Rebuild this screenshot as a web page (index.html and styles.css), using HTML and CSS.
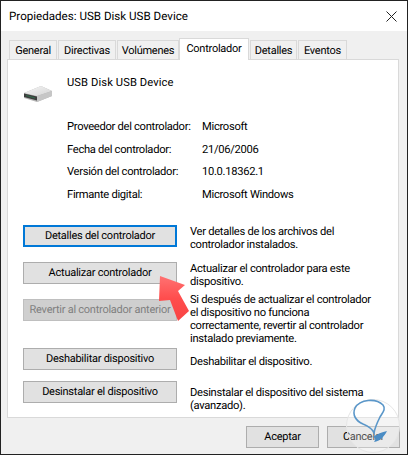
FILE: index.html
```html
<!DOCTYPE html>
<html lang="es">
<head>
  <meta charset="UTF-8">
  <title>Propiedades: USB Disk USB Device</title>
  <link rel="stylesheet" href="styles.css">
</head>
<body>
  <div class="window">
    <div class="titlebar">
      <span>Propiedades: USB Disk USB Device</span>
      <svg class="close" width="11" height="11" viewBox="0 0 11 11"><path d="M0.5 0.5L10.5 10.5M10.5 0.5L0.5 10.5" stroke="#222" fill="none"/></svg>
    </div>
    <div class="content">
      <div class="tabs">
        <div class="tab tab-general">General</div>
        <div class="tab tab-directivas">Directivas</div>
        <div class="tab tab-volumenes">Volúmenes</div>
        <div class="tab tab-active">Controlador</div>
        <div class="tab tab-detalles">Detalles</div>
        <div class="tab tab-eventos">Eventos</div>
      </div>
      <div class="panel">
        <div class="device">
          <svg class="device-icon" width="30" height="20" viewBox="0 0 30 20">
            <defs>
              <linearGradient id="driveTop" x1="0" y1="0" x2="1" y2="1">
                <stop offset="0" stop-color="#f6f6f6"/>
                <stop offset="1" stop-color="#d4d4d4"/>
              </linearGradient>
            </defs>
            <path d="M1 10L18 3L29 8L29 13L14 19L1 15Z" fill="#b5b5b5"/>
            <path d="M1 10L18 3L29 8L14 13Z" fill="url(#driveTop)"/>
            <path d="M14 13L29 8L29 13L14 19Z" fill="#c6c6c6"/>
            <path d="M1 10.5L14 13.5L14 17.5L1 14Z" fill="#3d3d3d"/>
            <path d="M3 12L12 14.5L12 15.5L3 13Z" fill="#2f6b4a"/>
          </svg>
          <span>USB Disk USB Device</span>
        </div>
        <div class="info">
          <span>Proveedor del controlador:</span><span>Microsoft</span>
          <span>Fecha del controlador:</span><span>21/06/2006</span>
          <span>Versión del controlador:</span><span>10.0.18362.1</span>
          <span>Firmante digital:</span><span>Microsoft Windows</span>
        </div>
        <div class="actions">
          <div class="action action-details">
            <button class="btn btn-focus">Detalles del controlador</button>
            <p>Ver detalles de los archivos del controlador instalados.</p>
          </div>
          <div class="action action-update">
            <button class="btn">Actualizar controlador</button>
            <p>Actualizar el controlador para este dispositivo.</p>
          </div>
          <div class="action action-revert">
            <button class="btn btn-disabled">Revertir al controlador anterior</button>
            <p>Si después de actualizar el controlador el dispositivo no funciona correctamente, revertir al controlador instalado previamente.</p>
          </div>
          <div class="action action-disable">
            <button class="btn">Deshabilitar dispositivo</button>
            <p>Deshabilitar el dispositivo.</p>
          </div>
          <div class="action action-remove">
            <button class="btn">Desinstalar el dispositivo</button>
            <p>Desinstalar el dispositivo del sistema (avanzado).</p>
          </div>
        </div>
      </div>
      <div class="footer">
        <button class="btn btn-footer">Aceptar</button>
        <button class="btn btn-footer">Cancelar</button>
      </div>
    </div>

    <svg class="arrow" width="34" height="48" viewBox="0 0 34 48">
      <defs>
        <linearGradient id="arrowFill" x1="0" y1="0" x2="0" y2="1">
          <stop offset="0" stop-color="#ff7272"/>
          <stop offset="0.5" stop-color="#ff4d4d"/>
          <stop offset="1" stop-color="#f84444"/>
        </linearGradient>
      </defs>
      <path d="M3 1L28 10L21 16L32 36L21 46L13 25L2 26Z" fill="url(#arrowFill)"/>
    </svg>

    <svg class="watermark" width="54" height="58" viewBox="0 0 54 58">
      <circle cx="27" cy="29" r="26.5" fill="#fff" fill-opacity="0.3" stroke="#e6e6e6"/>
      <path d="M37 8C30 1 14 2 9 11C6 18 10 24 17 27C22 29 26 31 28 36C29 30 32 24 34 20C37 15 40 12 37 8Z" fill="none" stroke="#5b97c9" stroke-width="1.6"/>
      <path d="M27 40C31 37 36 35 41 34C38 40 34 44 28 45C30 42 30 41 27 40Z" fill="#4a8cc4"/>
    </svg>
  </div>
</body>
</html>
```

FILE: styles.css
```css
* {
  box-sizing: border-box;
}

html,
body {
  margin: 0;
  height: 455px;
  overflow: hidden;
}

body {
  font-family: Roboto, Lato, sans-serif;
  font-size: 11.2px;
  letter-spacing: -0.3px;
  text-rendering: geometricPrecision;
  color: #000;
}

.window {
  position: relative;
  width: 408px;
  height: 455px;
  border: 1px solid #222;
  display: flex;
  flex-direction: column;
  background-color: #f0f0f0;
}

.titlebar {
  height: 30px;
  flex-shrink: 0;
  background-color: white;
  display: flex;
  align-items: center;
  justify-content: space-between;
  padding: 0 10px 0 8px;
  font-size: 11.6px;
  letter-spacing: 0;
}

.content {
  flex: 1;
  display: flex;
  flex-direction: column;
  padding: 7px 8px 0 6px;
}

/* tabs */
.tabs {
  display: flex;
  height: 21px;
  padding-left: 2px;
  align-items: flex-end;
  position: relative;
  z-index: 1;
  font-size: 11px;
  letter-spacing: -0.25px;
}

.tab {
  height: 19px;
  margin-right: 1px;
  background-color: #f0f0f0;
  border: 1px solid #d9d9d9;
  border-bottom: none;
  text-align: center;
  line-height: 20px;
}

.tab-general { width: 48px; }
.tab-directivas { width: 58px; }
.tab-volumenes { width: 62px; margin-right: 0; }
.tab-detalles { width: 47px; }
.tab-eventos { width: 49px; }

.tab-active {
  width: 70px;
  height: 22px;
  margin-bottom: -1px;
  background-color: white;
  line-height: 19px;
}

/* main panel */
.panel {
  width: 392px;
  height: 359px;
  background-color: white;
  border: 1px solid #d9d9d9;
  padding: 0 0 0 15px;
}

.device {
  display: flex;
  align-items: center;
  height: 45px;
  gap: 14px;
  letter-spacing: 0.1px;
}

.device-icon {
  margin-top: 20px;
}

.info {
  display: grid;
  grid-template-columns: 135px 1fr;
  grid-auto-rows: 22.7px;
  align-items: center;
  margin: 10px 0 0 44px;
  white-space: nowrap;
}

.actions {
  margin-top: 19px;
}

.action {
  display: flex;
  align-items: flex-start;
  gap: 13px;
}

.action p {
  margin: 0;
  width: 186px;
  line-height: 13.2px;
}

.action-details { height: 37px; }
.action-update { height: 31px; }
.action-revert { height: 55px; }
.action-disable { height: 33px; }

.action-revert .btn { margin-top: 6px; }
.action-disable p { margin-top: 7px; }
.action-remove p { margin-top: 5px; }

/* buttons */
.btn {
  width: 154px;
  height: 22px;
  flex-shrink: 0;
  padding: 0;
  background-color: #e1e1e1;
  border: 1px solid #adadad;
  font-family: inherit;
  font-size: 11px;
  letter-spacing: -0.25px;
  text-rendering: geometricPrecision;
  color: #000;
  line-height: 18px;
}

.btn-focus {
  border: 2px solid #0078d7;
}

.btn-disabled {
  background-color: #cfcfcf;
  border-color: #bfbfbf;
  color: #808080;
  white-space: nowrap;
}

.footer {
  display: flex;
  justify-content: flex-end;
  gap: 8px;
  padding-top: 8px;
  margin-right: -1px;
}

.btn-footer {
  width: 73px;
}

/* overlays */
.arrow {
  position: absolute;
  left: 156px;
  top: 274px;
}

.watermark {
  position: absolute;
  left: 345px;
  top: 396px;
}
```
